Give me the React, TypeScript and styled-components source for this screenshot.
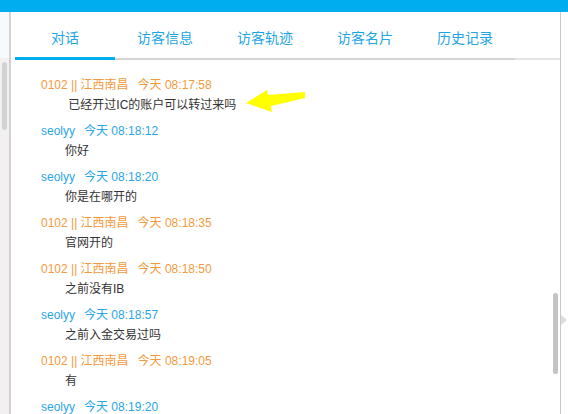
import React from "react";
import styled, { createGlobalStyle } from "styled-components";

const GlobalStyle = createGlobalStyle`
  html, body { margin: 0; padding: 0; background: #ffffff; overflow: hidden; }
  body { font-family: "Liberation Sans", "Noto Sans CJK SC", sans-serif; }
`;

const Page = styled.div`
  width: 568px;
  height: 414px;
  display: flex;
  flex-direction: column;
  overflow: hidden;
`;

const TopBar = styled.div`
  height: 12px;
  background: #00adef;
  flex: none;
`;

const Body = styled.div`
  flex: 1;
  display: flex;
  min-height: 0;
`;

const LeftStrip = styled.div`
  width: 9px;
  border-right: 2px solid #d2d2d2;
  display: flex;
  flex-direction: column;
  flex: none;
`;

const LeftTop = styled.div`
  height: 46px;
  background: #f7fafd;
`;

const LeftTrack = styled.div`
  flex: 1;
  background: #f2f0f0;
  padding: 4px 2px 0 2px;
`;

const LeftThumb = styled.div`
  width: 5px;
  height: 68px;
  border-radius: 3px;
  background: #d3d3d3;
`;

const Main = styled.div`
  flex: 1;
  display: flex;
  flex-direction: column;
  min-width: 0;
  border-right: 1px solid #c9c9c9;
`;

const TabBar = styled.div`
  display: flex;
  padding-left: 4px;
  height: 48px;
  flex: none;
`;

const Tab = styled.div<{ $active?: boolean }>`
  width: 100px;
  box-sizing: border-box;
  height: 48px;
  padding-top: 4px;
  display: flex;
  align-items: center;
  justify-content: center;
  font-size: 14px;
  color: #1ea6e4;
  border-bottom: ${(p) => (p.$active ? "3px solid #00adef" : "2px solid #d4d4d4")};
`;

const TabFiller = styled.div`
  flex: 1;
  height: 48px;
  box-sizing: border-box;
  border-bottom: 2px solid #e3e3e3;
`;

const ChatRow = styled.div`
  flex: 1;
  display: flex;
  min-height: 0;
  position: relative;
`;

const Messages = styled.div`
  flex: 1;
  padding: 15px 0 0 30px;
  overflow: hidden;
`;

const Message = styled.div`
  margin-bottom: 6px;
`;

const Header = styled.div<{ $visitor?: boolean }>`
  font-size: 12px;
  line-height: 20px;
  height: 20px;
  white-space: nowrap;
  color: ${(p) => (p.$visitor ? "#f59a3c" : "#2aa6e6")};
`;

const Time = styled.span`
  margin-left: 9px;
`;

const Content = styled.div`
  font-size: 12px;
  line-height: 20px;
  height: 20px;
  color: #333333;
  padding-left: 24px;
  white-space: nowrap;
`;

const Track = styled.div`
  width: 7px;
  flex: none;
  padding-top: 233px;
`;

const Thumb = styled.div`
  width: 5px;
  height: 81px;
  border-radius: 3px;
  background: #c3c3c3;
`;

const RightStrip = styled.div`
  width: 7px;
  flex: none;
  display: flex;
  flex-direction: column;
  padding-top: 303px;
`;

const Arrow = styled.svg`
  position: absolute;
  left: 224px;
  top: 28px;
`;

type Msg = { visitor: boolean; name: string; time: string; text: string };

const msgs: Msg[] = [
  { visitor: true, name: "0102 || 江西南昌", time: "今天 08:17:58", text: "\u00a0已经开过IC的账户可以转过来吗" },
  { visitor: false, name: "seolyy", time: "今天 08:18:12", text: "你好" },
  { visitor: false, name: "seolyy", time: "今天 08:18:20", text: "你是在哪开的" },
  { visitor: true, name: "0102 || 江西南昌", time: "今天 08:18:35", text: "官网开的" },
  { visitor: true, name: "0102 || 江西南昌", time: "今天 08:18:50", text: "之前没有IB" },
  { visitor: false, name: "seolyy", time: "今天 08:18:57", text: "之前入金交易过吗" },
  { visitor: true, name: "0102 || 江西南昌", time: "今天 08:19:05", text: "有" },
  { visitor: false, name: "seolyy", time: "今天 08:19:20", text: "" },
];

const tabs = ["对话", "访客信息", "访客轨迹", "访客名片", "历史记录"];

export default function App() {
  return (
    <Page>
      <GlobalStyle />
      <TopBar />
      <Body>
        <LeftStrip>
          <LeftTop />
          <LeftTrack>
            <LeftThumb />
          </LeftTrack>
        </LeftStrip>
        <Main>
          <TabBar>
            {tabs.map((t, i) => (
              <Tab key={t} $active={i === 0}>
                {t}
              </Tab>
            ))}
            <TabFiller />
          </TabBar>
          <ChatRow>
            <Messages>
              {msgs.map((m, i) => (
                <Message key={i}>
                  <Header $visitor={m.visitor}>
                    {m.name}
                    <Time>{m.time}</Time>
                  </Header>
                  <Content>{m.text}</Content>
                </Message>
              ))}
            </Messages>
            <Track>
              <Thumb />
            </Track>
            <Arrow width="80" height="30" viewBox="235 88 80 30">
              <polygon
                points="246,103 267,90 268,95 305,92 305,98 271,106 272,112"
                fill="#ffff00"
              />
            </Arrow>
          </ChatRow>
        </Main>
        <RightStrip>
          <svg width="6" height="10" viewBox="0 0 6 10">
            <polygon points="0,0 6,5 0,10" fill="#dcdcdc" />
          </svg>
        </RightStrip>
      </Body>
    </Page>
  );
}
